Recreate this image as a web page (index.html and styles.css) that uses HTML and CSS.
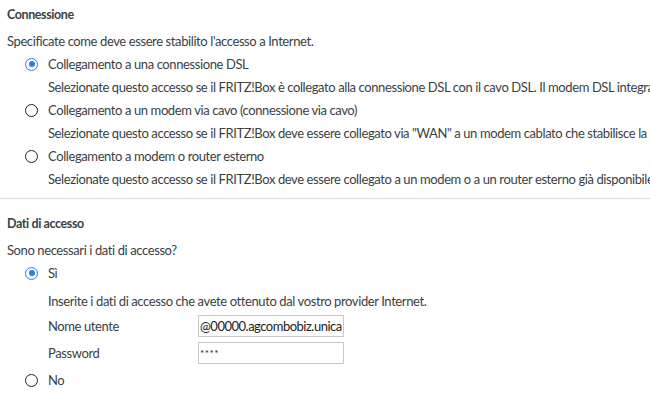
FILE: index.html
```html
<!DOCTYPE html>
<html>
<head>
    <title>Connessione Internet</title>
    <link rel="stylesheet" href="styles.css">
</head>
<body>
    <div class="section">
        <h4>Connessione</h4>
        <p class="intro">Specificate come deve essere stabilito l'accesso a Internet.</p>

        <div class="option">
            <label class="radio"><span class="dot checked"></span>Collegamento a una connessione DSL</label>
            <p class="hint">Selezionate questo accesso se il FRITZ!Box è collegato alla connessione DSL con il cavo DSL. Il modem DSL integrato nel FRITZ!Box viene utilizzato.</p>
        </div>
        <div class="option">
            <label class="radio"><span class="dot"></span>Collegamento a un modem via cavo (connessione via cavo)</label>
            <p class="hint">Selezionate questo accesso se il FRITZ!Box deve essere collegato via "WAN" a un modem cablato che stabilisce la connessione a Internet.</p>
        </div>
        <div class="option">
            <label class="radio"><span class="dot"></span>Collegamento a modem o router esterno</label>
            <p class="hint">Selezionate questo accesso se il FRITZ!Box deve essere collegato a un modem o a un router esterno già disponibile.</p>
        </div>
    </div>

    <div class="section second">
        <h4>Dati di accesso</h4>
        <p class="intro">Sono necessari i dati di accesso?</p>

        <div class="option">
            <label class="radio"><span class="dot checked"></span>Sì</label>
            <div class="login">
                <p class="hint">Inserite i dati di accesso che avete ottenuto dal vostro provider Internet.</p>
                <div class="field">
                    <label for="user">Nome utente</label>
                    <input type="text" id="user" value="@00000.agcombobiz.unica">
                </div>
                <div class="field">
                    <label for="pass">Password</label>
                    <input type="text" id="pass" class="secret" value="****">
                </div>
            </div>
        </div>
        <div class="option no">
            <label class="radio"><span class="dot"></span>No</label>
        </div>
    </div>
</body>
</html>
```

FILE: styles.css
```css
body {
    margin: 0;
    font-family: Lato, sans-serif;
    font-size: 13px;
    letter-spacing: -0.4px;
    color: #3a3f44;
    background: #fff;
    overflow: hidden;
    white-space: nowrap;
}

.section {
    padding: 4px 0 0 7px;
}

.section.second {
    border-top: 1px solid #dcdcdc;
    margin-top: 8px;
    padding-top: 14px;
}

h4 {
    margin: 0;
    font-size: 12.5px;
    font-weight: 700;
    line-height: 22px;
}

.intro {
    margin: 4px 0 0;
    line-height: 22px;
}

.option {
    padding-left: 18px;
}

.option.no {
    padding-top: 2px;
}

.radio {
    display: flex;
    align-items: center;
    line-height: 24px;
}

.dot {
    width: 11px;
    height: 11px;
    border: 1.5px solid #222;
    border-radius: 50%;
    margin-right: 10px;
    position: relative;
    flex: none;
}

.dot.checked {
    border-color: #2b7fe0;
}

.dot.checked::after {
    content: "";
    position: absolute;
    left: 2.5px;
    top: 2.5px;
    width: 6px;
    height: 6px;
    border-radius: 50%;
    background: #2b7fe0;
}

.hint {
    margin: 0 0 0 23px;
    line-height: 22px;
}

.login {
    padding-top: 5px;
}

.field {
    display: flex;
    align-items: center;
    margin-left: 23px;
    height: 27px;
}

.field label {
    width: 150px;
}

.field input {
    width: 143px;
    height: 18px;
    padding: 1px 0 1px 1px;
    border: 1px solid #c8c8c8;
    font-family: Lato, sans-serif;
    font-size: 13px;
    letter-spacing: -0.5px;
    color: #222;
    outline: none;
}

.field input.secret {
    font-size: 10px;
    letter-spacing: 0.5px;
}
```
